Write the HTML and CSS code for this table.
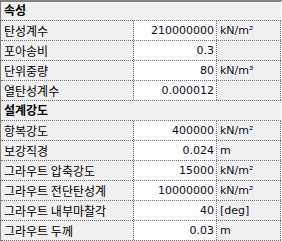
FILE: index.html
```html
<!DOCTYPE html>
<html>
<head>
<meta charset="utf-8">
<link rel="stylesheet" href="styles.css">
</head>
<body>
<div class="grid">
  <div class="cat"><span>속성</span></div>
  <div class="row"><div class="lbl">탄성계수</div><div class="val">210000000</div><div class="unit">kN/m²</div></div>
  <div class="row"><div class="lbl">포아송비</div><div class="val">0.3</div><div class="unit"></div></div>
  <div class="row"><div class="lbl">단위중량</div><div class="val">80</div><div class="unit">kN/m³</div></div>
  <div class="row"><div class="lbl">열탄성계수</div><div class="val">0.000012</div><div class="unit"></div></div>
  <div class="cat"><span>설계강도</span></div>
  <div class="row"><div class="lbl">항복강도</div><div class="val">400000</div><div class="unit">kN/m²</div></div>
  <div class="row"><div class="lbl">보강직경</div><div class="val">0.024</div><div class="unit">m</div></div>
  <div class="row"><div class="lbl">그라우트 압축강도</div><div class="val">15000</div><div class="unit">kN/m²</div></div>
  <div class="row"><div class="lbl">그라우트 전단탄성계</div><div class="val">10000000</div><div class="unit">kN/m²</div></div>
  <div class="row"><div class="lbl">그라우트 내부마찰각</div><div class="val">40</div><div class="unit">[deg]</div></div>
  <div class="row"><div class="lbl">그라우트 두께</div><div class="val">0.03</div><div class="unit">m</div></div>
</div>
</body>
</html>
```
FILE: styles.css
```css
html, body {
  margin: 0;
  padding: 0;
  background: #ffffff;
}
.grid {
  width: 282px;
  height: 241px;
  box-sizing: border-box;
  border-top: 2px solid #828282;
  border-left: 1px solid #828282;
  border-right: 1px solid #ffffff;
  background: #f0f0f0;
  overflow: hidden;
  display: flex;
  flex-direction: column;
  font-family: "Noto Sans CJK KR", "Noto Sans", sans-serif;
  font-size: 12px;
  color: #000;
}
.cat {
  height: 20px;
  box-sizing: border-box;
  border-bottom: 1px dotted #707070;
  display: flex;
  align-items: center;
  padding-left: 3px;
  font-weight: bold;
  line-height: 16px;
}
.grid > .cat:first-child {
  height: 19px;
}
.cat span {
  position: relative;
  top: -1px;
}
.row {
  height: 20px;
  box-sizing: border-box;
  border-bottom: 1px dotted #707070;
  display: grid;
  grid-template-columns: 133px 83px 64px;
}
.row > div {
  box-sizing: border-box;
  border-right: 1px dotted #707070;
  display: flex;
  align-items: center;
  white-space: nowrap;
  overflow: hidden;
}
.lbl {
  padding-left: 3px;
  line-height: 16px;
}
.val {
  background: #ffffff;
  justify-content: flex-end;
  padding-right: 2px;
  font-family: "DejaVu Sans", Verdana, sans-serif;
  font-size: 11px;
  color: #0a0a1e;
}
.unit {
  padding-left: 3px;
  font-family: "DejaVu Sans", Verdana, sans-serif;
  font-size: 11px;
  color: #0a0a1e;
}
```
